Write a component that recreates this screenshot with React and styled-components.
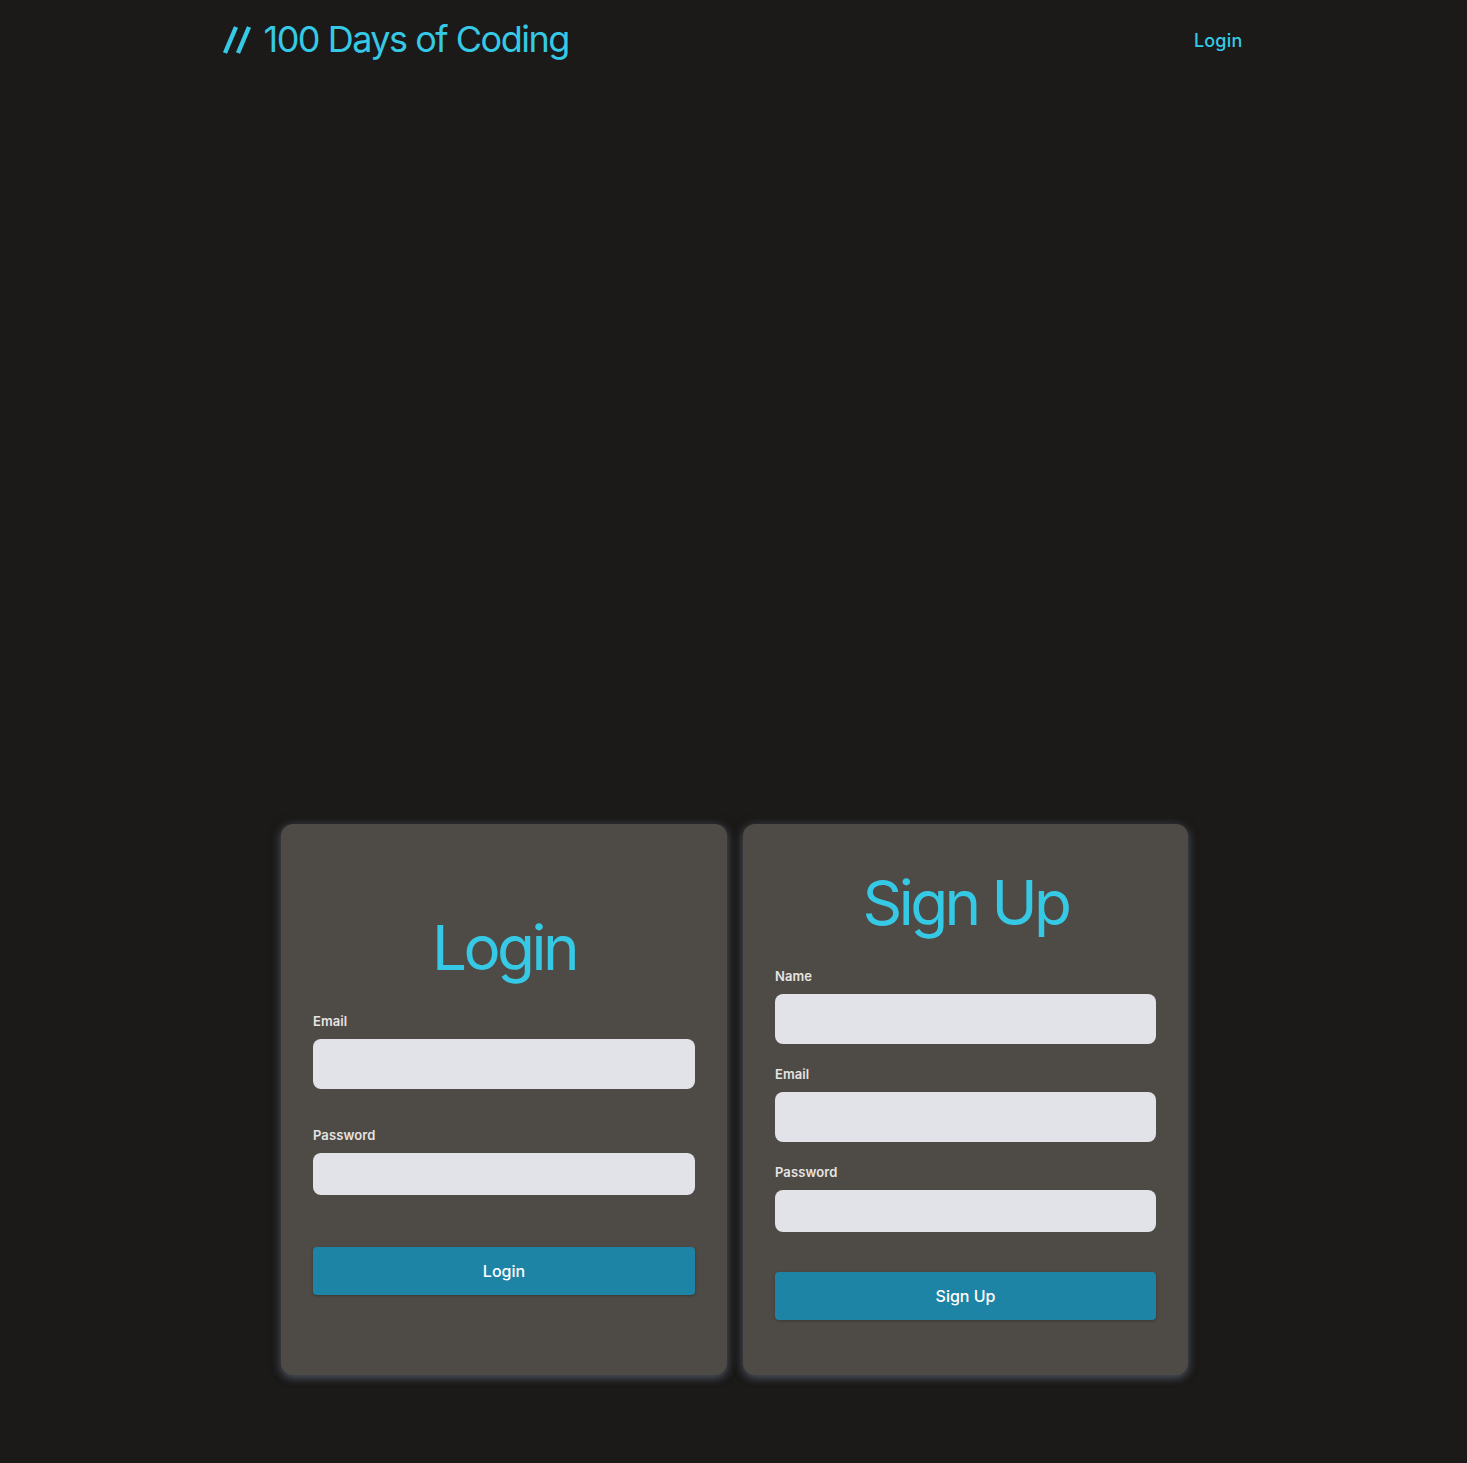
import React from "react";
import styled, { createGlobalStyle } from "styled-components";

const GlobalStyle = createGlobalStyle`
  html, body {
    margin: 0;
    padding: 0;
    background: #1b1a19;
  }
  body {
    font-family: Inter, "Noto Sans", "Liberation Sans", sans-serif;
  }
  * {
    box-sizing: border-box;
  }
`;

const accent = "#36c9e6";

const StyledPage = styled.div`
  min-height: 100vh;
  display: flex;
  flex-direction: column;
`;
const StyledHeader = styled.header`
  width: 1024px;
  height: 80px;
  margin: 0 auto;
  display: flex;
  align-items: center;
  justify-content: space-between;
  padding: 0 3px 0 0;
`;
const StyledLogo = styled.a`
  display: flex;
  align-items: center;
  gap: 12px;
  color: ${accent};
  font-size: 36px;
  line-height: 1.2;
  text-decoration: none;
  letter-spacing: -1.5px;
`;
const StyledNavLink = styled.a`
  color: ${accent};
  font-size: 18px;
  font-weight: 500;
  text-decoration: none;
  letter-spacing: 0.2px;
`;
const StyledMain = styled.main`
  flex: 1;
  display: flex;
  align-items: flex-end;
  justify-content: center;
  padding: 0 0 88px 2px;
`;
const StyledCards = styled.div`
  display: grid;
  grid-template-columns: 446px 445px;
  gap: 16px;
  height: 551px;
`;
const StyledCard = styled.section`
  background: #4e4a45;
  border-radius: 12px;
  padding: ${({ $top }) => $top}px 32px 0;
  display: flex;
  flex-direction: column;
  box-shadow: 0 3px 8px rgba(112, 118, 145, 0.55),
    0 0 12px rgba(70, 70, 75, 0.35);
`;
const StyledTitle = styled.h2`
  margin: 0 0 28px;
  text-align: center;
  color: ${accent};
  font-size: 62px;
  font-weight: 400;
  line-height: 1.2;
  letter-spacing: -3.6px;
`;
const StyledField = styled.div`
  display: flex;
  flex-direction: column;
  margin-bottom: ${({ $space }) => $space}px;
`;
const StyledLabel = styled.label`
  color: #e6e4e1;
  font-size: 13px;
  font-weight: 600;
  line-height: 16px;
  margin-bottom: 10px;
  letter-spacing: 0.1px;
`;
const StyledInput = styled.input`
  width: 100%;
  height: ${({ $h }) => $h}px;
  border: none;
  border-radius: 8px;
  background: #e2e3e8;
  padding: 0 12px;
  font: inherit;
  outline: none;
`;
const StyledButton = styled.button`
  width: 100%;
  height: 48px;
  border: none;
  border-radius: 4px;
  background: #1e84a5;
  color: #ffffff;
  font-family: inherit;
  font-size: 16px;
  font-weight: 500;
  box-shadow: 0 1px 3px rgba(0, 0, 0, 0.25);
  cursor: pointer;
`;

const SlashIcon = () => (
  <svg width="30" height="32" viewBox="0 0 30 32">
    <line x1="14" y1="3" x2="3" y2="29" stroke={accent} strokeWidth="4.4" />
    <line x1="27" y1="3" x2="16" y2="29" stroke={accent} strokeWidth="4.4" />
  </svg>
);

const loginFields = [
  { label: "Email", type: "email", h: 50, space: 38 },
  { label: "Password", type: "password", h: 42, space: 52 }
];
const signupFields = [
  { label: "Name", type: "text", h: 50, space: 22 },
  { label: "Email", type: "email", h: 50, space: 22 },
  { label: "Password", type: "password", h: 42, space: 40 }
];

const AuthCard = ({ title, top, fields, action }) => (
  <StyledCard $top={top}>
    <StyledTitle>{title}</StyledTitle>
    {fields.map(field => (
      <StyledField key={field.label} $space={field.space}>
        <StyledLabel>{field.label}</StyledLabel>
        <StyledInput type={field.type} $h={field.h} />
      </StyledField>
    ))}
    <StyledButton>{action}</StyledButton>
  </StyledCard>
);

const App = () => (
  <>
    <GlobalStyle />
    <StyledPage>
      <StyledHeader>
        <StyledLogo href="#">
          <SlashIcon />
          100 Days of Coding
        </StyledLogo>
        <StyledNavLink href="#">Login</StyledNavLink>
      </StyledHeader>
      <StyledMain>
        <StyledCards>
          <AuthCard title="Login" top={87} fields={loginFields} action="Login" />
          <AuthCard
            title="Sign Up"
            top={42}
            fields={signupFields}
            action="Sign Up"
          />
        </StyledCards>
      </StyledMain>
    </StyledPage>
  </>
);

export default App;
